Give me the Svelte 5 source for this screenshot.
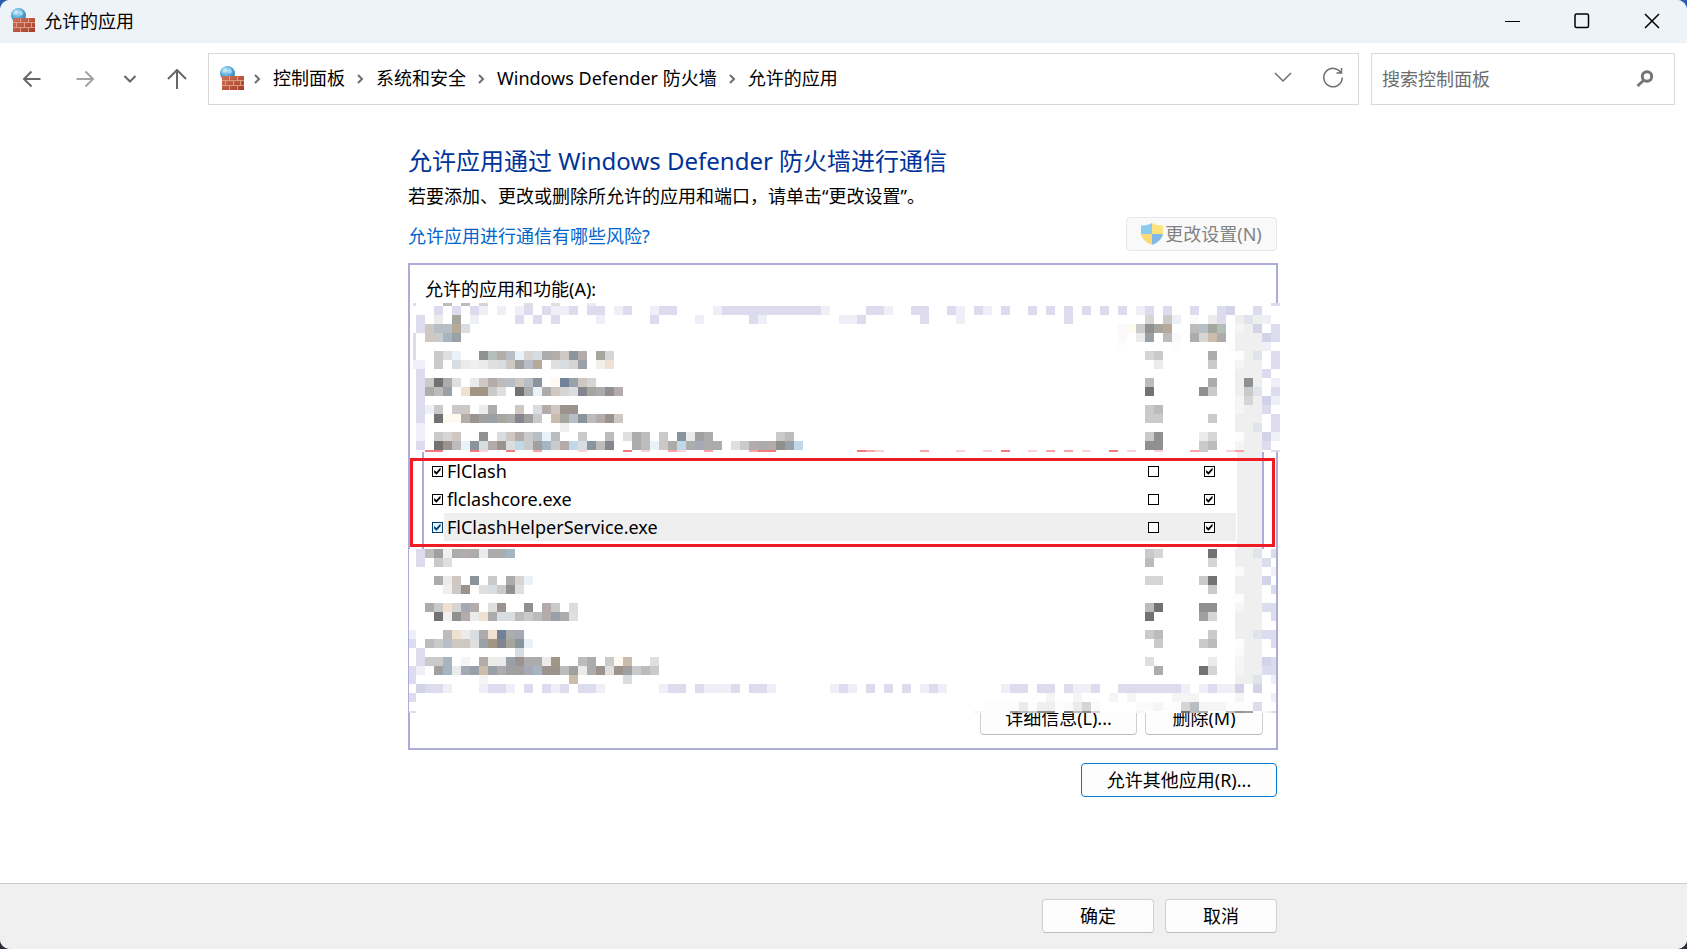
<script>
  let search = '';

  const crumbs = ['控制面板', '系统和安全', 'Windows Defender 防火墙', '允许的应用'];

  let apps = [
    { name: 'FlClash', allowed: true, domain: false, shared: true },
    { name: 'flclashcore.exe', allowed: true, domain: false, shared: true },
    { name: 'FlClashHelperService.exe', allowed: true, domain: false, shared: true, selected: true },
  ];

  const CELL = 9;

  // one letter per mosaic tile
  const tints = {
    0: '#727272', 1: '#909090', 2: '#a0a0a0', 3: '#acacac', 4: '#bcbcbc',
    5: '#cacaca', 6: '#d6d5d3', 7: '#dfdfdf', 8: '#ebebeb', 9: '#f5f5f5',
    a: '#dcdcee', b: '#efeff8', D: '#d3d3e8', L: '#dfe3ea', e: '#efefef',
    f: '#fafafa', z: '#fdfdfd', v: '#eaf2f9', l: '#d8dde1', m: '#b8bec6',
    M: '#a6b5c2', S: '#9aa0a8', s: '#8a949c', n: '#71819a', p: '#858590',
    P: '#a6a8b6', k: '#c0d8e8', g: '#b4beb8', w: '#a5a69e', W: '#cfc8c2',
    G: '#b4acaa', q: '#9c938e', u: '#a09684', t: '#b8aa9a', T: '#ccbcac',
    c: '#f0e0d2', C: '#f3efec', y: '#fffaf0', R: '#f4787c', h: '#f8a4a8',
    r: '#f9d3d5',
  };

  // row number, then pairs of start column and tiles
  const upper = [
    [-1, -1, 'a', 3, '4.4.6', 12, '7..7', 19, '8', 95, 'a'],
    [0, 2, 'a.a.ab.b.ba.abba.aa.ba..baa', 33, 'baaaaaaaaaaab', 50, 'aab..aa..ab.ab.a..a.a.a.a.a.a.ba.a..a..aD.xa'],
    [1, 0, 'a.8.w.b', 11, 'a.a.a....b.....a....b.....ab', 47, 'bba', 56, 'a...b', 72, 'a', 81, '6.5b.f.8a.eLeb'],
    [2, 0, 'aWmmtl', 78, 'fy51wt..4mwg.9eD.a'],
    [3, -1, 'a.W5MS', 78, 'f.8S.4f.36T3.eeeDa'],
    [4, -1, 'a', 78, 'z', 84, 'z', 90, 'zeeeb'],
    [5, -1, 'a..57v..1gGmv6l3GWsG.w6', 81, '65.....3..zeL.a'],
    [6, -1, 'bb.5zl8e87lW2mt.7l6S.Cc', 82, '8.....5..9ee.a'],
    [7, 0, 'a', 91, 'eeea'],
    [8, 0, 'a5037.8WG4mWms.ynSW6', 81, '4......3..e1e.b'],
    [9, 0, 'a34S.cuu57.03v3W6lpw31G', 81, '0.....15..e5L.a'],
    [10, 0, 'a', 91, '96eDb'],
    [11, 0, 'ab5.5W.83..W.lGWqq', 81, '54', 91, '9eea'],
    [12, 0, 'a.0yyGq2Sw3p25.Twms4GqW', 81, '55.....5..eee.a'],
    [13, 0, 'b', 16, 'e', 91, 'eeL.a'],
    [14, 0, 'b.56W..1.lWG5mv4..5..4.734.5.s823', 40, '54', 81, '51....86..zeeDb'],
    [15, 0, 'a.0q4vslGqlk52M5Gkls4p..34vW3k3P33.75G3G1Sk', 81, '11....54..9eea'],
    [16, 1, 'RR...Rr..R..h....r....R.r..hr..h....hRR', 49, 'Rhr....h...r..r.R..r.h.h.r..R.r..r...h5..rhee.a'],
  ];

  const lower = [
    [0, 0, 'a42C3G3833M', 81, '56.....0..eeL.a'],
    [1, 0, 'a.57', 81, '4......6..eeea'],
    [2, 91, 'fee.b'],
    [3, 2, '38W.s.5.36v', 81, '66....50..eeeD'],
    [4, 3, 'C5q.7l517', 88, '5..eee.a'],
    [5, 91, 'zee'],
    [6, 1, '35c6PG.7q..1.G5.l', 81, '40....11..9eeaa'],
    [7, 2, '0C1G8c3ll454GS37', 81, '0.....26..eee.a'],
    [8, 91, 'eee'],
    [9, -1, 'b...4c8l3cn3P', 81, '54.....5..eeLaa'],
    [10, -1, 'a.45mWW7Supwsv', 82, '5....54..zee.a'],
    [11, 0, 'a', 11, 'l', 91, 'fee'],
    [12, 0, 'a55M.9.G88Sq338u..43.5yT..7', 81, '7......8..9eeDa'],
    [13, -1, 'ab.2M8PSTS322PMqq4283q7q2545', 82, '3....06..9eeaa'],
    [14, -1, 'a', 7, '9', 17, 'T', 23, 'l', 91, 'eeL.b'],
    [15, 0, 'Daab...baab.a.aba.aab', 27, 'baa.abbba.aab', 46, 'bab.a.a.a.bab', 65, 'baa.aa.abba..aaaaaaab.babbD.D'],
    [16, -1, 'a', 70, '9..9...9.9....999....9...b'],
    [17, 63, 'zzzz8zCezf86f....ff9zz6m999zzza'],
    [18, -1, 'a', 62, '9', 66, '24W11z0416....9....04GzzTq2', 94, '9a'],
  ];

  function tiles(rows) {
    const out = [];
    for (const [row, ...parts] of rows) {
      for (let i = 0; i < parts.length; i += 2) {
        [...parts[i + 1]].forEach((key, n) => {
          if (tints[key]) out.push({ x: (parts[i] + n) * CELL, y: row * CELL, fill: tints[key] });
        });
      }
    }
    return out;
  }

  const upperTiles = tiles(upper);
  const lowerTiles = tiles(lower);
</script>

{#snippet firewall()}
  <svg class="firewall" width="25" height="25" viewBox="0 0 25 25" aria-hidden="true">
    <defs>
      <radialGradient id="globe" cx="0.4" cy="0.3" r="0.8">
        <stop offset="0" stop-color="#bfe6f7" />
        <stop offset="0.45" stop-color="#57aedb" />
        <stop offset="1" stop-color="#1f6fa8" />
      </radialGradient>
      <linearGradient id="brick" x2="1" y2="1">
        <stop offset="0" stop-color="#cf7458" />
        <stop offset="1" stop-color="#a63d28" />
      </linearGradient>
    </defs>
    <circle cx="7.5" cy="7.5" r="7.5" fill="url(#globe)" />
    <path d="M3 3q3-2 4 0t-2 3-3 1M9 2q3 1 3 4l-2 2-2-2z" fill="#e2f5fc" opacity="0.5" />
    <rect x="2" y="10" width="22" height="14" fill="url(#brick)" />
    <path
      d="M2 14.5h22M2 19.5h22M9.5 10v4.5M17.5 10v4.5M5.5 14.5v5M13.5 14.5v5M20.5 14.5v5M9.5 19.5V24M17.5 19.5V24"
      stroke="#dc9a84"
      fill="none"
    />
  </svg>
{/snippet}

<div class="window">
  <header class="titlebar">
    <div class="title">
      {@render firewall()}
      <span>允许的应用</span>
    </div>
    <div class="window-controls">
      <button aria-label="最小化">
        <svg width="16" height="16"><path d="M1 8.5h15" /></svg>
      </button>
      <button aria-label="最大化">
        <svg width="16" height="16"><rect x="1" y="1" width="13.5" height="13.5" rx="1.5" stroke-width="1.5" /></svg>
      </button>
      <button aria-label="关闭">
        <svg width="16" height="16"><path d="M1 1l14 14M15 1L1 15" stroke-width="1.5" /></svg>
      </button>
    </div>
  </header>

  <div class="toolbar">
    <nav class="history">
      <button aria-label="后退">
        <svg width="20" height="20"><path d="M18.5 10H2M9.5 2.5L2 10l7.5 7.5" /></svg>
      </button>
      <button aria-label="前进" class="dim">
        <svg width="20" height="20"><path d="M1.5 10H18M10.5 2.5L18 10l-7.5 7.5" /></svg>
      </button>
      <button aria-label="最近的位置" class="narrow">
        <svg width="20" height="20"><path d="M4.5 7l5.5 5.5L15.5 7" stroke-width="2" /></svg>
      </button>
      <button aria-label="向上" class="up">
        <svg width="20" height="20"><path d="M10 20V1M1 10l9-9 9 9" /></svg>
      </button>
    </nav>

    <div class="address">
      {@render firewall()}
      <ol class="crumbs">
        {#each crumbs as crumb}
          <li>
            <svg width="31" height="14" aria-hidden="true"><path d="M13 4l4 4-4 4" /></svg>
            <a href="#top">{crumb}</a>
          </li>
        {/each}
      </ol>
      <button aria-label="展开地址">
        <svg width="20" height="20"><path d="M2 5l8 8 8-8" stroke-width="1.5" /></svg>
      </button>
      <button aria-label="刷新" class="refresh">
        <svg width="22" height="22">
          <path d="M19 6A9.2 9.2 0 1 0 20.2 10.500M19.5 1V6H14.5" stroke-width="1.5" />
        </svg>
      </button>
    </div>

    <div class="search">
      <input type="text" aria-label="搜索控制面板" placeholder="搜索控制面板" bind:value={search} />
      <svg width="18" height="18" aria-hidden="true">
        <circle cx="11" cy="6.5" r="4.7" stroke-width="3" />
        <path d="M7.5 10.5L1.5 16" stroke-width="3" />
      </svg>
    </div>
  </div>

  <main>
    <h1>允许应用通过 Windows Defender 防火墙进行通信</h1>
    <p>若要添加、更改或删除所允许的应用和端口，请单击“更改设置”。</p>

    <div class="actions">
      <a href="#risks">允许应用进行通信有哪些风险?</a>
      <button class="btn change" disabled>
        <svg width="22" height="22" viewBox="0 0 22 22" aria-hidden="true">
          <path d="M11 0Q6 3 0 2.5V11H11z" fill="#8acbee" />
          <path d="M11 0Q16 3 22 2.5V11H11z" fill="#fde37c" />
          <path d="M0 11Q1 18 11 22V11z" fill="#fbd978" />
          <path d="M22 11Q21 18 11 22V11z" fill="#80b9e6" />
        </svg>
        <span>更改设置(N)</span>
      </button>
    </div>

    <section class="panel">
      <h2 id="apps-label">允许的应用和功能(A):</h2>

      <svg class="mosaic top" width="867" height="149" viewBox="-3 -3 867 149" aria-hidden="true">
        <rect x="-3" y="-3" width="867" height="149" fill="#fff" />
        {#each upperTiles as t}
          <rect x={t.x} y={t.y} width={CELL} height={CELL} fill={t.fill} />
        {/each}
      </svg>

      <div class="list">
        <table aria-labelledby="apps-label">
          <tbody>
            {#each apps as app, i}
              <tr class:selected={app.selected}>
                <td class="tick"><input type="checkbox" id="app-{i}" bind:checked={app.allowed} /></td>
                <td class="name"><label for="app-{i}">{app.name}</label></td>
                <td class="net"><input type="checkbox" aria-label="{app.name} 专用" bind:checked={app.domain} /></td>
                <td class="net"><input type="checkbox" aria-label="{app.name} 公用" bind:checked={app.shared} /></td>
              </tr>
            {/each}
          </tbody>
        </table>
        <div class="scrollbar"></div>
        <div class="marker"></div>
      </div>

      <svg class="mosaic bottom" width="867" height="164" viewBox="-7 0 867 164" aria-hidden="true">
        <rect x="-7" y="0" width="867" height="164" fill="#fff" />
        {#each lowerTiles as t}
          <rect x={t.x} y={t.y} width={CELL} height={CELL} fill={t.fill} />
        {/each}
      </svg>

      <div class="panel-buttons">
        <button class="btn details">详细信息(L)...</button>
        <button class="btn remove">删除(M)</button>
      </div>
    </section>

    <div class="other">
      <button class="btn primary">允许其他应用(R)...</button>
    </div>
  </main>

  <footer>
    <div class="footer-inner">
      <button class="btn">确定</button>
      <button class="btn">取消</button>
    </div>
  </footer>
</div>

<style>
  :global(body) {
    background: linear-gradient(#2d5fae, #2a2f38);
  }

  .window {
    min-height: 100vh;
    display: flex;
    flex-direction: column;
    background: #fff;
    border-radius: 10px;
    overflow: hidden;
    color: #000;
    font-family: "Noto Sans", "Noto Sans CJK SC", sans-serif;
    font-size: 18px;
    line-height: 24px;
  }

  button,
  input {
    font: inherit;
    color: inherit;
    margin: 0;
    padding: 0;
    box-sizing: border-box;
  }

  button {
    border: none;
    background: none;
  }

  svg {
    display: block;
    flex: none;
  }

  .titlebar {
    display: flex;
    justify-content: space-between;
    height: 43px;
    background: #eef3f8;
  }

  .title {
    display: flex;
    align-items: center;
    gap: 8px;
    padding: 0 0 2px 11px;
  }

  .window-controls {
    display: flex;
  }

  .window-controls button {
    display: flex;
    align-items: center;
    justify-content: center;
    width: 70px;
    height: 41px;
  }

  .window-controls svg {
    fill: none;
    stroke: #000;
  }

  .toolbar {
    display: flex;
    padding: 10px 12px 0 8px;
  }

  .history {
    display: flex;
    gap: 5px;
  }

  .history button {
    display: flex;
    align-items: center;
    justify-content: center;
    width: 48px;
  }

  .history .narrow {
    width: 32px;
  }

  .history .up {
    width: 52px;
  }

  .history svg {
    fill: none;
    stroke: #666;
    stroke-width: 2;
  }

  .history .dim svg {
    stroke: #a3a3a3;
  }

  .address,
  .search {
    display: flex;
    align-items: center;
    box-sizing: border-box;
    height: 52px;
    border: 1px solid #d9d9d9;
  }

  .address {
    flex: 1;
    margin-left: 5px;
    padding: 0 14px 2px 11px;
  }

  .address svg:not(.firewall) {
    fill: none;
    stroke: #6e6e6e;
  }

  .crumbs {
    display: flex;
    flex: 1;
    margin: 0 0 0 -3px;
    padding: 0;
    list-style: none;
  }

  .crumbs li {
    display: flex;
    align-items: center;
  }

  .crumbs svg {
    stroke-width: 2;
  }

  .crumbs a {
    color: inherit;
    text-decoration: none;
  }

  .refresh {
    margin-left: 29px;
  }

  .search {
    width: 304px;
    margin-left: 12px;
    padding: 0 20px 0 10px;
  }

  .search input {
    flex: 1;
    min-width: 0;
    border: none;
    outline: none;
    background: none;
  }

  .search input::placeholder {
    color: #6d6d6d;
    opacity: 1;
  }

  .search svg {
    fill: none;
    stroke: #757575;
  }

  main,
  .footer-inner {
    box-sizing: border-box;
    width: 100%;
    max-width: 871px;
    margin: 0 auto;
  }

  main {
    flex: 1;
    padding: 40px 1px 24px 0;
  }

  h1 {
    margin: 0;
    color: #003399;
    font-size: 24px;
    font-weight: 400;
    line-height: 32px;
  }

  p {
    margin: 7px 0 0;
  }

  .actions {
    display: flex;
    align-items: flex-end;
    justify-content: space-between;
    margin: 9px 1px 12px 0;
  }

  .actions a {
    color: #0066cc;
    line-height: 30px;
    text-decoration: none;
  }

  .btn {
    display: flex;
    align-items: center;
    justify-content: center;
    height: 34px;
    border: 1px solid #d0d0d0;
    border-bottom-color: #bcbcbc;
    border-radius: 4px;
    background: #fdfdfd;
  }

  .change {
    gap: 2px;
    width: 151px;
    border-color: #e7e7e7;
    background: #f9f9f9;
    color: #838383;
  }

  .panel {
    border: 2px solid #abadd8;
    padding-bottom: 13px;
  }

  h2 {
    margin: 0;
    padding: 12px 15px 2px;
    font-size: 18px;
    font-weight: 400;
    line-height: 24px;
  }

  .mosaic {
    position: relative;
    z-index: 1;
    shape-rendering: crispEdges;
  }

  .mosaic.top {
    margin-left: 3px;
  }

  .mosaic.bottom {
    margin-left: -1px;
  }

  .list {
    position: relative;
    display: flex;
    gap: 1px;
    margin: 0 12px;
    border: solid #abadd8;
    border-width: 0 2px;
  }

  table {
    flex: 1;
    margin: 5px 0 8px;
    border-collapse: collapse;
  }

  td {
    height: 28px;
    padding: 0;
    line-height: 24px;
  }

  .tick {
    width: 20px;
  }

  .tick input {
    margin-left: 8px;
  }

  .name {
    padding-left: 3px;
  }

  .net {
    width: 56px;
  }

  .net input {
    margin-left: 24px;
  }

  .selected td:not(.tick) {
    background: #efefef;
  }

  td input {
    display: block;
    appearance: none;
    width: 11px;
    height: 11px;
    border: 1px solid #000;
    background: #fff;
    color: #000;
  }

  td input:checked::before {
    content: "";
    display: block;
    width: 9px;
    height: 9px;
    background: currentColor;
    clip-path: polygon(12% 38%, 38% 60%, 84% 12%, 84% 42%, 38% 92%, 12% 68%);
  }

  .selected .tick input {
    border-color: #003c6e;
    background: #eaf4fc;
    color: #003c6e;
  }

  .scrollbar {
    width: 25px;
    background: #efefef;
  }

  .marker {
    position: absolute;
    inset: 6px -13px 2px -14px;
    border: 3px solid #f01c24;
    pointer-events: none;
  }

  .panel-buttons {
    display: flex;
    justify-content: flex-end;
    gap: 8px;
    margin: -12px 13px 0 0;
  }

  .details {
    width: 157px;
  }

  .remove {
    width: 118px;
  }

  .other {
    display: flex;
    justify-content: flex-end;
    margin: 13px 1px 0 0;
  }

  .primary {
    width: 196px;
    border-color: #0078d4;
  }

  footer {
    border-top: 1px solid #cbcbcb;
    background: #f0f0f0;
  }

  .footer-inner {
    display: flex;
    justify-content: flex-end;
    gap: 11px;
    padding: 15px 2px 16px 0;
  }

  .footer-inner .btn {
    width: 112px;
  }
</style>
